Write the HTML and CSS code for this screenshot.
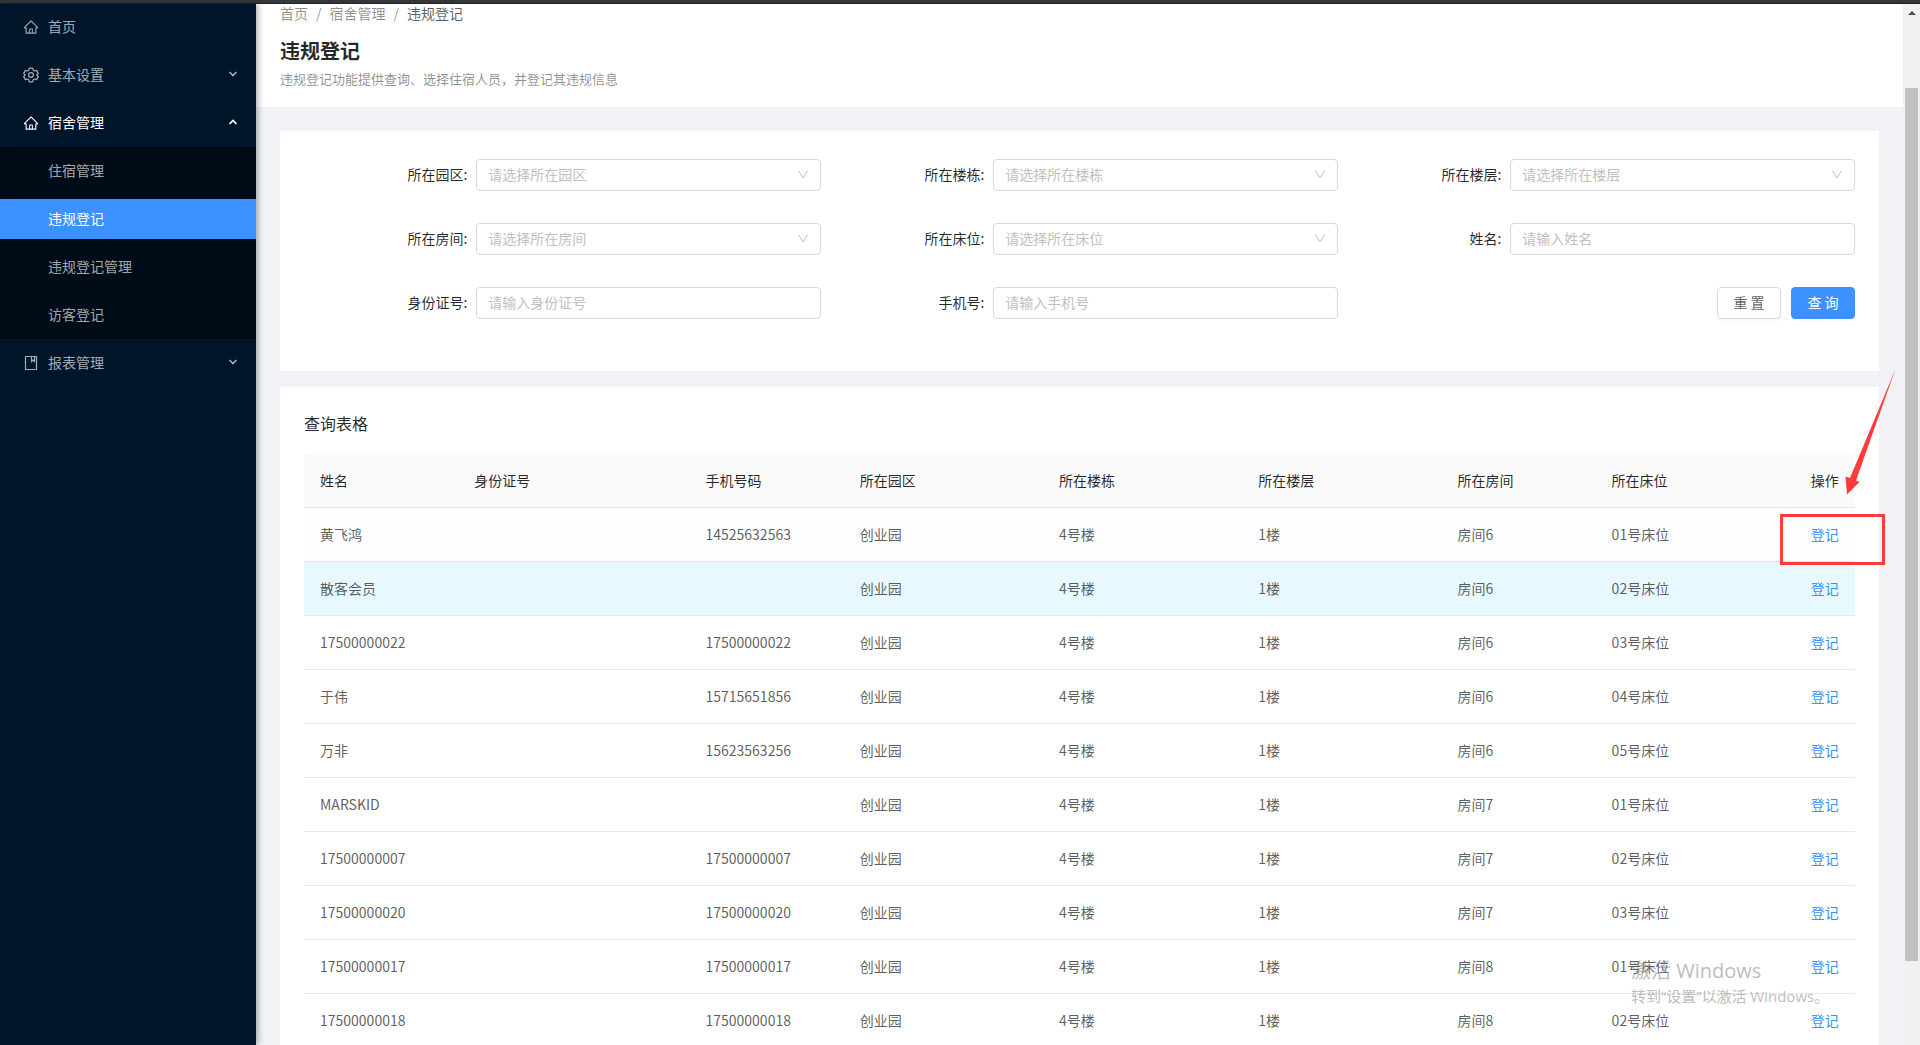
FILE: index.html
```html
<!DOCTYPE html>
<html lang="zh-CN">
<head>
<meta charset="utf-8">
<title>违规登记</title>
<link rel="stylesheet" href="styles.css">
</head>
<body>
<svg class="sprite" aria-hidden="true">
  <symbol id="home" viewBox="0 0 1024 1024"><path d="M946.500 505L560.100 118.800l-25.900-25.900a31.500 31.500 0 0 0-44.400 0L77.500 505a63.900 63.900 0 0 0-18.800 46c.4 35.200 29.700 63.300 64.900 63.300h42.500V940h691.800V614.300h43.400c17.100 0 33.200-6.700 45.300-18.800a63.600 63.600 0 0 0 18.700-45.300c0-17-6.700-33.100-18.800-45.200zM568 868H456V664h112v204zm217.900-325.700V868H632V640c0-22.100-17.900-40-40-40H432c-22.100 0-40 17.900-40 40v228H238.100V542.300h-96l370-369.700 23.100 23.100L882 542.300h-96.100z"/></symbol>
  <symbol id="gear" viewBox="0 0 16 16"><path d="M6.300 1.200h3.400l.5 2 1.400.8 2-.6 1.700 3-1.500 1.600 1.500 1.600-1.700 3-2-.6-1.400.8-.5 2H6.300l-.5-2-1.400-.8-2 .6-1.700-3L2.200 8 .7 6.400l1.700-3 2 .6 1.400-.8z" fill="none" stroke="currentColor" stroke-width="1.200" stroke-linejoin="round"/><circle cx="8" cy="8" r="2.400" fill="none" stroke="currentColor" stroke-width="1.200"/></symbol>
  <symbol id="book" viewBox="0 0 16 16"><path d="M2.500 1.500h11v13h-11zM8.500 1.500v5l1.500-1.500 1.500 1.500v-5" fill="none" stroke="currentColor" stroke-width="1.200"/></symbol>
  <symbol id="caret" viewBox="0 0 10 10"><path d="M1.500 3l3.500 3.500L8.500 3" fill="none" stroke="currentColor" stroke-width="1.700"/></symbol>
  <symbol id="thin" viewBox="0 0 12 12"><path d="M1.500 2L6 9l4.500-7" fill="none" stroke="currentColor"/></symbol>
</svg>
<div class="window-edge"></div>
<div class="layout">
  <nav class="sidebar">
    <ul class="menu">
      <li><a class="item" href="#"><svg class="icon"><use href="#home"/></svg>首页</a></li>
      <li><a class="item" href="#"><svg class="icon"><use href="#gear"/></svg>基本设置<svg class="caret"><use href="#caret"/></svg></a></li>
      <li class="open"><a class="item" href="#"><svg class="icon"><use href="#home"/></svg>宿舍管理<svg class="caret"><use href="#caret"/></svg></a>
        <ul class="submenu">
          <li><a class="item" href="#">住宿管理</a></li>
          <li><a class="item active" href="#">违规登记</a></li>
          <li><a class="item" href="#">违规登记管理</a></li>
          <li><a class="item" href="#">访客登记</a></li>
        </ul>
      </li>
      <li><a class="item" href="#"><svg class="icon"><use href="#book"/></svg>报表管理<svg class="caret"><use href="#caret"/></svg></a></li>
    </ul>
  </nav>
  <main class="main">
    <header class="page-header">
      <div class="breadcrumb"><a href="#">首页</a><i>/</i><a href="#">宿舍管理</a><i>/</i><span>违规登记</span></div>
      <h1>违规登记</h1>
      <p>违规登记功能提供查询、选择住宿人员，并登记其违规信息</p>
    </header>
    <div class="content">
      <form class="card filters">
        <div class="field"><label for="park">所在园区:</label><div class="control select"><select id="park"><option>请选择所在园区</option></select><svg class="arrow"><use href="#thin"/></svg></div></div>
        <div class="field"><label for="building">所在楼栋:</label><div class="control select"><select id="building"><option>请选择所在楼栋</option></select><svg class="arrow"><use href="#thin"/></svg></div></div>
        <div class="field"><label for="floor">所在楼层:</label><div class="control select"><select id="floor"><option>请选择所在楼层</option></select><svg class="arrow"><use href="#thin"/></svg></div></div>
        <div class="field"><label for="room">所在房间:</label><div class="control select"><select id="room"><option>请选择所在房间</option></select><svg class="arrow"><use href="#thin"/></svg></div></div>
        <div class="field"><label for="bed">所在床位:</label><div class="control select"><select id="bed"><option>请选择所在床位</option></select><svg class="arrow"><use href="#thin"/></svg></div></div>
        <div class="field"><label for="name">姓名:</label><div class="control"><input id="name" type="text" placeholder="请输入姓名"></div></div>
        <div class="field"><label for="idno">身份证号:</label><div class="control"><input id="idno" type="text" placeholder="请输入身份证号"></div></div>
        <div class="field"><label for="phone">手机号:</label><div class="control"><input id="phone" type="text" placeholder="请输入手机号"></div></div>
        <div class="actions"><button type="reset">重 置</button><button type="button" class="primary">查 询</button></div>
      </form>
      <section class="card results">
        <h2>查询表格</h2>
        <table>
          <colgroup><col class="w-s"><col class="w-l"><col class="w-s"><col class="w-m"><col class="w-m"><col class="w-m"><col class="w-s"><col class="w-m"><col class="w-xs"></colgroup>
          <thead><tr><th>姓名</th><th>身份证号</th><th>手机号码</th><th>所在园区</th><th>所在楼栋</th><th>所在楼层</th><th>所在房间</th><th>所在床位</th><th>操作</th></tr></thead>
          <tbody>
            <tr class="leaving"><td>黄飞鸿</td><td></td><td>14525632563</td><td>创业园</td><td>4号楼</td><td>1楼</td><td>房间6</td><td>01号床位</td><td class="marked"><a href="#">登记</a>
              <span class="mark-box"></span>
              <svg class="mark-arrow" viewBox="0 0 52 128"><path d="M50.500 1L5 110 .5 108.500 2 126.500 14.500 114 11 112.500z"/></svg></td></tr>
            <tr class="hover"><td>散客会员</td><td></td><td></td><td>创业园</td><td>4号楼</td><td>1楼</td><td>房间6</td><td>02号床位</td><td><a href="#">登记</a></td></tr>
            <tr><td>17500000022</td><td></td><td>17500000022</td><td>创业园</td><td>4号楼</td><td>1楼</td><td>房间6</td><td>03号床位</td><td><a href="#">登记</a></td></tr>
            <tr><td>于伟</td><td></td><td>15715651856</td><td>创业园</td><td>4号楼</td><td>1楼</td><td>房间6</td><td>04号床位</td><td><a href="#">登记</a></td></tr>
            <tr><td>万非</td><td></td><td>15623563256</td><td>创业园</td><td>4号楼</td><td>1楼</td><td>房间6</td><td>05号床位</td><td><a href="#">登记</a></td></tr>
            <tr><td>MARSKID</td><td></td><td></td><td>创业园</td><td>4号楼</td><td>1楼</td><td>房间7</td><td>01号床位</td><td><a href="#">登记</a></td></tr>
            <tr><td>17500000007</td><td></td><td>17500000007</td><td>创业园</td><td>4号楼</td><td>1楼</td><td>房间7</td><td>02号床位</td><td><a href="#">登记</a></td></tr>
            <tr><td>17500000020</td><td></td><td>17500000020</td><td>创业园</td><td>4号楼</td><td>1楼</td><td>房间7</td><td>03号床位</td><td><a href="#">登记</a></td></tr>
            <tr><td>17500000017</td><td></td><td>17500000017</td><td>创业园</td><td>4号楼</td><td>1楼</td><td>房间8</td><td>01号床位</td><td><a href="#">登记</a></td></tr>
            <tr><td>17500000018</td><td></td><td>17500000018</td><td>创业园</td><td>4号楼</td><td>1楼</td><td>房间8</td><td>02号床位</td><td><a href="#">登记</a></td></tr>
          </tbody>
        </table>
      </section>
    </div>
  </main>
  <div class="scrollbar" aria-hidden="true"><span class="up"></span><span class="thumb"></span><span class="rest"></span></div>
</div>
<div class="watermark"><strong>激活 Windows</strong><span>转到“设置”以激活 Windows。</span></div>
</body>
</html>
```
FILE: styles.css
```css
* { box-sizing: border-box; }

body {
  margin: 0;
  height: 100vh;
  overflow: hidden;
  display: flex;
  flex-direction: column;
  background: #f0f2f5;
  color: rgba(0, 0, 0, .65);
  font: 14px/22px "Noto Sans CJK SC", sans-serif;
}

a { color: inherit; text-decoration: none; }
ul { list-style: none; margin: 0; padding: 0; }
.sprite { position: absolute; width: 0; height: 0; }

.window-edge {
  flex: none;
  height: 4px;
  background: #35363a;
  border-bottom: 1px solid #222427;
}

.layout { flex: 1; min-height: 0; display: flex; }

/* Sidebar */
.sidebar {
  position: relative;
  z-index: 1;
  flex: none;
  width: 256px;
  padding-top: 3px;
  background: #001529;
  box-shadow: 2px 0 6px rgba(0, 21, 41, .35);
  color: rgba(255, 255, 255, .65);
}
.menu { display: flex; flex-direction: column; gap: 8px; }
.item {
  display: flex;
  align-items: center;
  height: 40px;
  padding: 0 18px 2px 23px;
}
.icon { width: 16px; height: 16px; margin: 2px 9px 0 0; fill: currentColor; }
.caret { width: 10px; height: 10px; margin-left: auto; }
.open > .item { color: #fff; }
.open .caret { transform: rotate(180deg); }
.open { margin-bottom: -4px; }
.submenu {
  display: flex;
  flex-direction: column;
  gap: 8px;
  margin-top: 4px;
  padding: 4px 0;
  background: #000c17;
  box-shadow: inset 0 2px 8px rgba(0, 0, 0, .45);
}
.submenu .item { padding-left: 48px; }
.item.active { background: #3b91ff; color: #fff; }

/* Page header */
.main { flex: 1; min-width: 0; overflow: hidden; }
.page-header { background: #fff; padding: 0 24px 18px; }
.breadcrumb { line-height: 18px; color: rgba(0, 0, 0, .45); }
.breadcrumb i { margin: 0 8px; font-style: normal; }
.breadcrumb span { color: rgba(0, 0, 0, .65); }
h1 {
  margin: 13px 0 2px;
  font-size: 20px;
  line-height: 32px;
  font-weight: 700;
  color: rgba(0, 0, 0, .85);
}
.page-header p { margin: 0; font-size: 13px; line-height: 20px; color: rgba(0, 0, 0, .45); }

.content { padding: 24px; display: flex; flex-direction: column; gap: 16px; }
.card { background: #fff; padding: 24px; }

/* Filters */
.filters {
  display: grid;
  grid-template-columns: repeat(3, 1fr);
  grid-auto-rows: 40px;
  row-gap: 24px;
  padding-bottom: 48px;
}
.field { display: grid; grid-template-columns: 1fr 2fr; align-items: center; }
.field label { text-align: right; padding: 0 9px 2px 0; color: rgba(0, 0, 0, .85); }
.control { position: relative; display: flex; }
.control input, .control select {
  width: 100%;
  height: 32px;
  padding: 0 11px 2px;
  border: 1px solid #d9d9d9;
  border-radius: 4px;
  background: #fff;
  font: inherit;
  color: #bfbfbf;
  appearance: none;
}
.control input::placeholder { color: #bfbfbf; }
.arrow { position: absolute; right: 12px; top: 10px; width: 12px; height: 12px; color: #bfbfbf; pointer-events: none; }
.actions { display: flex; justify-content: flex-end; align-items: center; gap: 10px; }
button {
  width: 64px;
  height: 32px;
  padding: 0 0 2px;
  border: 1px solid #d9d9d9;
  border-radius: 4px;
  background: #fff;
  box-shadow: 0 2px 0 rgba(0, 0, 0, .02);
  font: inherit;
  color: rgba(0, 0, 0, .65);
}
button.primary { background: #3b91ff; border-color: #3b91ff; color: #fff; }

/* Results */
h2 { margin: 0 0 19px; font-size: 16px; line-height: 24px; font-weight: 400; color: rgba(0, 0, 0, .85); }
table { width: 100%; table-layout: fixed; border-collapse: separate; border-spacing: 0; }
.w-xs { width: 60px; }
.w-s { width: 154px; }
.w-m { width: 199px; }
.w-l { width: 231px; }
th, td { height: 54px; padding: 0 0 2px 16px; border-bottom: 1px solid #e8e8e8; text-align: left; }
th { background: #fafafa; font-weight: 400; color: rgba(0, 0, 0, .85); }
th:first-child { border-top-left-radius: 4px; }
th:last-child { border-top-right-radius: 4px; }
td a { color: #3b91ff; }
.leaving td { background: #fcfeff; }
.hover td { background: #e8f8ff; }

/* Red annotation over the first row's action */
.marked { position: relative; }
.mark-box { position: absolute; left: -15px; top: 6px; width: 105px; height: 51px; border: 3px solid #ff3b3b; z-index: 1; }
.mark-arrow { position: absolute; left: 50px; top: -140px; width: 52px; height: 128px; fill: #ff3b3b; z-index: 1; }

/* Scrollbar */
.scrollbar { flex: none; width: 17px; display: flex; flex-direction: column; background: #f1f1f1; padding: 0 2px; }
.up { height: 84px; padding: 7px 3px; }
.up::before { content: ""; display: block; border: solid transparent; border-width: 0 4px 4px; border-bottom-color: #505050; }
.thumb { flex: 873; background: #c1c1c1; }
.rest { flex: 84; }

/* Desktop activation notice */
.watermark {
  position: absolute;
  right: 90px;
  bottom: 38px;
  width: 199px;
  display: flex;
  flex-direction: column;
  color: rgba(130, 130, 130, .55);
  font-family: "Open Sans", "Noto Sans CJK SC", sans-serif;
  white-space: nowrap;
}
.watermark strong { font-size: 20px; line-height: 28px; font-weight: 400; }
.watermark span { font-size: 15px; line-height: 22px; }
```
